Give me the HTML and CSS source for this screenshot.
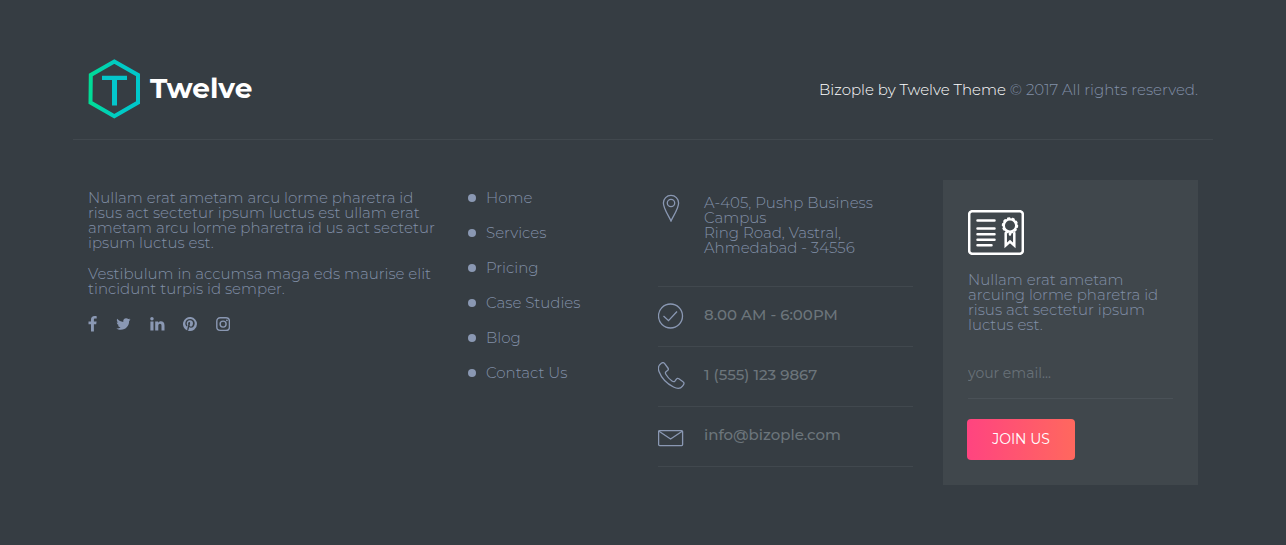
FILE: index.html
```
<!DOCTYPE html>
<html lang="en">
<head>
<meta charset="utf-8">
<title>Twelve</title>
<link rel="stylesheet" href="styles.css">
</head>
<body>
<footer class="footer">
  <div class="top">
    <a class="brand">
      <svg class="logo" width="54" height="62" viewBox="0 0 54 62">
        <defs><linearGradient id="g" x1="0" y1="0" x2="1" y2="0"><stop offset="0" stop-color="#00dc96"/><stop offset=".55" stop-color="#00cbc4"/><stop offset="1" stop-color="#00c8cc"/></linearGradient></defs>
        <path d="M27.300 3.600 51 17V44.500L27.300 58.200 3.500 44.500 3.800 17Z" fill="none" stroke="url(#g)" stroke-width="4"/>
        <path d="M15 17.800H40V22H30V47.500H25V22H15Z" fill="#04c6cb"/>
      </svg>
      <span class="name">Twelve</span>
    </a>
    <p class="copy"><span class="owner">Bizople by Twelve Theme</span> © 2017 All rights reserved.</p>
  </div>
  <div class="cols">
    <section class="about">
      <p>Nullam erat ametam arcu lorme pharetra id risus act sectetur ipsum luctus est ullam erat ametam arcu lorme pharetra id us act sectetur ipsum luctus est.</p>
      <p class="second">Vestibulum in accumsa maga eds maurise elit tincidunt turpis id semper.</p>
      <div class="social">
        <svg width="9" height="16" viewBox="0 0 9 16"><path d="M8.700.2V2.600H7.200C6.100 2.600 5.900 3.100 5.900 3.900V5.600H8.600L8.200 8.300H5.900V15.500H3V8.300H.5V5.600H3V3.600C3 1.300 4.400 0 6.600 0 7.600 0 8.400.1 8.700.2Z"/></svg>
        <svg width="15" height="16" viewBox="0 0 15 16"><path d="M14.600 3.500C14.200 4.100 13.700 4.600 13.100 5.100V5.500C13.100 9.400 10.200 13.800 4.700 13.800 3.100 13.800 1.600 13.300.3 12.500 1.800 12.700 3.400 12.300 4.600 11.300 3.300 11.300 2.200 10.500 1.900 9.300 2.300 9.400 2.800 9.400 3.200 9.200 1.800 9 .8 7.800.8 6.300 1.200 6.600 1.700 6.700 2.200 6.700 .9 5.800.4 4.100 1.200 2.800 2.800 4.600 4.800 5.700 7.300 5.900 6.900 3.900 8.300 2.200 10.100 2.200 11 2.200 11.700 2.600 12.300 3.100 12.900 3 13.600 2.700 14.100 2.400 13.900 3 13.500 3.600 12.900 4 13.500 3.900 14.100 3.800 14.600 3.500Z"/></svg>
        <svg width="15" height="16" viewBox="0 0 15 16"><path d="M.4 5.500H3.500V14.500H.4ZM5.200 5.500H8.200V6.800C8.700 6 9.500 5.300 11 5.300 13 5.300 14.500 6.600 14.500 9.400V14.500H11.500V9.700C11.500 8.500 11 7.700 10 7.700 9 7.700 8.300 8.500 8.300 9.600V14.500H5.200Z"/><circle cx="1.950" cy="2.700" r="1.750"/></svg>
        <svg width="14" height="16" viewBox="0 0 14 16"><path d="M14 8A7 7 0 0 1 4.900 14.700C5.200 14.200 5.600 13.500 5.700 12.900L6.200 11C6.500 11.500 7.200 11.800 7.900 11.800 10.100 11.800 11.700 9.800 11.700 7.200 11.700 4.800 9.700 3 7.200 3 4 3 2.300 5.100 2.300 7.500 2.300 8.500 2.900 9.900 3.900 10.400 4 10.500 4.100 10.400 4.200 10.300L4.400 9.500C4.400 9.400 4.400 9.300 4.300 9.200 4 8.800 3.700 8.100 3.700 7.500 3.700 5.900 4.900 4.300 7 4.300 8.800 4.300 10 5.500 10 7.200 10 9.200 9 10.600 7.700 10.600 7 10.600 6.400 10 6.600 9.300 6.800 8.400 7.200 7.500 7.200 6.900 7.200 5.400 5.100 5.600 5.100 7.600 5.100 8.200 5.300 8.600 5.300 8.600L4.400 12.600C4.200 13.300 4.300 14.100 4.300 14.500A7 7 0 1 1 14 8Z"/></svg>
        <svg width="14" height="16" viewBox="0 0 14 16"><g fill="none" stroke="#8a98b3" stroke-width="1.400"><rect x=".8" y="1.800" width="12.600" height="12.600" rx="3.400"/><circle cx="7.100" cy="8.100" r="3"/></g><circle cx="10.900" cy="4.300" r=".9"/></svg>
      </div>
    </section>
    <ul class="menu">
      <li><a>Home</a></li><li><a>Services</a></li><li><a>Pricing</a></li><li><a>Case Studies</a></li><li><a>Blog</a></li><li><a>Contact Us</a></li>
    </ul>
    <section class="contact">
      <div class="row address">
        <svg class="ico" width="28" height="28" viewBox="0 0 28 28"><path d="M13 27C11.500 23 5.400 15 5.400 9A7.600 7.600 0 0 1 20.600 9C20.600 15 14.500 23 13 27Z"/><circle cx="13" cy="9" r="3.700"/></svg>
        <p>A-405, Pushp Business Campus<br>Ring Road, Vastral,<br>Ahmedabad - 34556</p>
      </div>
      <div class="row"><svg class="ico" width="28" height="28" viewBox="0 0 28 28"><circle cx="12.500" cy="14" r="12"/><path d="M5.500 14 10.500 18.700 19 9.500"/></svg><span class="info">8.00 AM - 6:00PM</span></div>
      <div class="row"><svg class="ico" width="28" height="28" viewBox="0 0 28 28"><path d="M3.300 1.300C4.600.4 5.900.5 6.700 1.600L9.900 6C10.700 7.100 10.400 7.900 9.500 8.600L8 9.700C7 10.500 7.300 11.400 8 12.500 9.600 15.200 11.700 17.400 14 19 15.200 19.800 16.200 20 16.900 19.100L18.200 17.300C18.900 16.300 19.800 16 20.900 16.800L25 19.700C26.200 20.500 26.300 21.700 25.400 22.900L24.500 24.100C22.800 26.500 19.300 26.900 15.500 25 9.200 21.800 3.300 15.500 1 9.500-.4 5.800.8 3 3.300 1.300Z"/></svg><span class="info">1 (555) 123 9867</span></div>
      <div class="row"><svg class="ico" width="28" height="28" viewBox="0 0 28 28"><rect x=".6" y="8.600" width="24" height="15" rx="1"/><path d="M1 9.200 12.600 17 24.200 9.200"/></svg><span class="info">info@bizople.com</span></div>
    </section>
    <section class="card">
      <svg class="cert" width="56" height="45" viewBox="0 0 56 45" fill="none" stroke="#fff" stroke-linecap="round">
        <rect x="1.200" y="1.200" width="53.600" height="42.600" rx="3" stroke-width="2.500"/>
        <path d="M9.500 10.500H26.500M9.500 18.500H26.500M9.500 24.200H26.500M9.500 29.700H26.500M9.500 35.300H23.500" stroke-width="2.500"/>
        <circle cx="42" cy="15.500" r="6.200" stroke-width="2.300"/>
        <circle cx="42" cy="15.500" r="7.200" stroke-width="2" stroke-dasharray="1.500 3.024"/>
        <path d="M37.700 23V35.500L42 31.500 46.300 35.500V23M42 23.500V24.500" stroke-width="2.500"/>
      </svg>
      <p>Nullam erat ametam arcuing lorme pharetra id risus act sectetur ipsum luctus est.</p>
      <input class="email" type="text" placeholder="your email...">
      <button class="join">JOIN US</button>
    </section>
  </div>
</footer>
</body>
</html>
```
FILE: styles.css
```
* { box-sizing: border-box; }
body { margin: 0; background: #363d43; font-family: Montserrat, Inter, sans-serif; font-weight: 300; font-size: 15px; line-height: 15px; color: #8290a8; }
p, ul { margin: 0; padding: 0; }
.footer { width: 1140px; height: 545px; margin: 0 auto; }
.top { display: flex; justify-content: space-between; height: 140px; padding: 58px 15px 0; border-bottom: 1px solid #41484e; }
.brand { display: flex; gap: 9px; }
.logo { margin-left: -1px; }
.name { font-size: 28px; font-weight: 700; line-height: 60px; color: #fff; }
.copy { padding-top: 24px; white-space: nowrap; }
.owner { color: #fff; }
.cols { display: grid; grid-template-columns: 380px 190px 285px 255px; padding: 40px 15px 0; }
.about { padding-top: 10px; }
.about p { width: 350px; }
.about .second { margin-top: 16px; }
.social { display: flex; gap: 18.8px; margin-top: 20px; fill: #8a98b3; }
.menu { list-style: none; }
.menu li { display: flex; align-items: center; gap: 10px; height: 35px; white-space: nowrap; }
.menu li::before { content: ""; width: 8px; height: 8px; border-radius: 50%; background: #8a98b3; }
.contact { width: 255px; }
.row { display: flex; gap: 18px; height: 60px; padding-top: 15px; border-bottom: 1px solid #41484e; }
.address { height: 107px; }
.ico { flex: none; fill: none; stroke: #8a98b3; stroke-width: 1.3; }
.address .ico { margin-top: -1px; }
.info { font-weight: 500; color: #6c757b; line-height: 25px; white-space: nowrap; }
.card { height: 305px; padding: 30px 25px 0; background: #40474c; }
.cert { display: block; margin-bottom: 17px; }
.email { display: block; width: 205px; height: 52px; margin-top: 15px; padding: 0; border: 0; border-bottom: 1px solid #4a5157; background: none; font: 400 14px Montserrat, Inter, sans-serif; outline: 0; }
.email::placeholder { color: #687178; opacity: 1; }
.join { display: block; width: 108px; height: 41px; margin: 20px 0 0 -1px; padding: 0; border: 0; border-radius: 4px; background: linear-gradient(90deg, #ff4480, #ff685e); color: #fff; font: 400 14px/41px Montserrat, Inter, sans-serif; }
```
